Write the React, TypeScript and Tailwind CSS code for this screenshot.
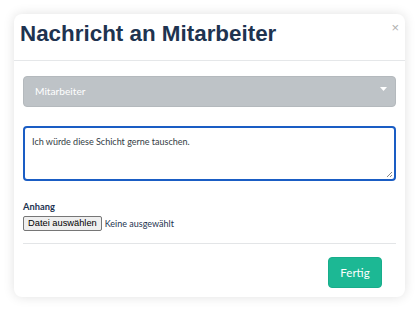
import React from "react";

export default function App() {
  return (
    <div className="w-[420px] h-[311px] bg-white pt-[14px] pl-[14px]" style={{ fontFamily: "Lato, 'Noto Sans', sans-serif" }}>
      <div className="w-[391px] h-[283px] bg-white rounded-[8px] shadow-[0_0_12px_rgba(0,0,0,0.12)] flex flex-col">
        <div className="relative h-[47px] border-b border-[#e5e7e9] pl-[6px] pt-[6px]">
          <h1 className="text-[22.4px] font-bold text-[#1e3350] leading-[28px]" style={{ fontFamily: "'Liberation Sans', Arial, sans-serif" }}>
            Nachricht an Mitarbeiter
          </h1>
          <span className="absolute right-[6px] top-[7px] text-[13px] text-[#b0b0b0] leading-none" style={{ fontFamily: "'Liberation Sans', Arial, sans-serif" }}>×</span>
        </div>
        <div className="flex flex-col px-[9px] pt-[15px]">
          <div className="relative h-[31px] rounded-[4px] bg-[#bec3c7] border border-[#b4b9bd] flex items-center pl-[11px]">
            <span className="text-[10.2px] text-white">Mitarbeiter</span>
            <svg className="absolute right-[8px] top-[10px]" width="7" height="4" viewBox="0 0 7 4"><path d="M0 0h7L3.5 4z" fill="#fff" /></svg>
          </div>
          <div className="mt-[19px] h-[55px] rounded-[4px] border-2 border-[#1a5dc4] px-[7px] pt-[5px] relative leading-[12px]">
            <span className="text-[9px] text-[#333c44]">Ich würde diese Schicht gerne tauschen.</span>
            <svg className="absolute right-[1px] bottom-[1px]" width="7" height="7" viewBox="0 0 7 7"><path d="M6 1L1 6M6 4L4 6" stroke="#888" strokeWidth="1" /></svg>
          </div>
          <div className="mt-[20px] text-[9.3px] font-bold text-[#1e3350] leading-[12px]">Anhang</div>
          <div className="mt-[3px] flex items-center gap-[3px]">
            <span className="h-[15px] px-[4px] flex items-center bg-[#efefef] border border-[#767676] rounded-[2px] text-[9.3px] text-black" style={{ fontFamily: "'Liberation Sans', Arial, sans-serif" }}>Datei auswählen</span>
            <span className="text-[9px] text-[#1e3350]">Keine ausgewählt</span>
          </div>
          <div className="mt-[12px] border-t border-[#e3e5e7]" />
          <div className="flex justify-end pr-[14px] pt-[13px]">
            <button className="w-[54px] h-[31px] rounded-[4px] bg-[#1cb894] border border-[#18ad8b] text-white text-[11.5px]">Fertig</button>
          </div>
        </div>
      </div>
    </div>
  );
}
